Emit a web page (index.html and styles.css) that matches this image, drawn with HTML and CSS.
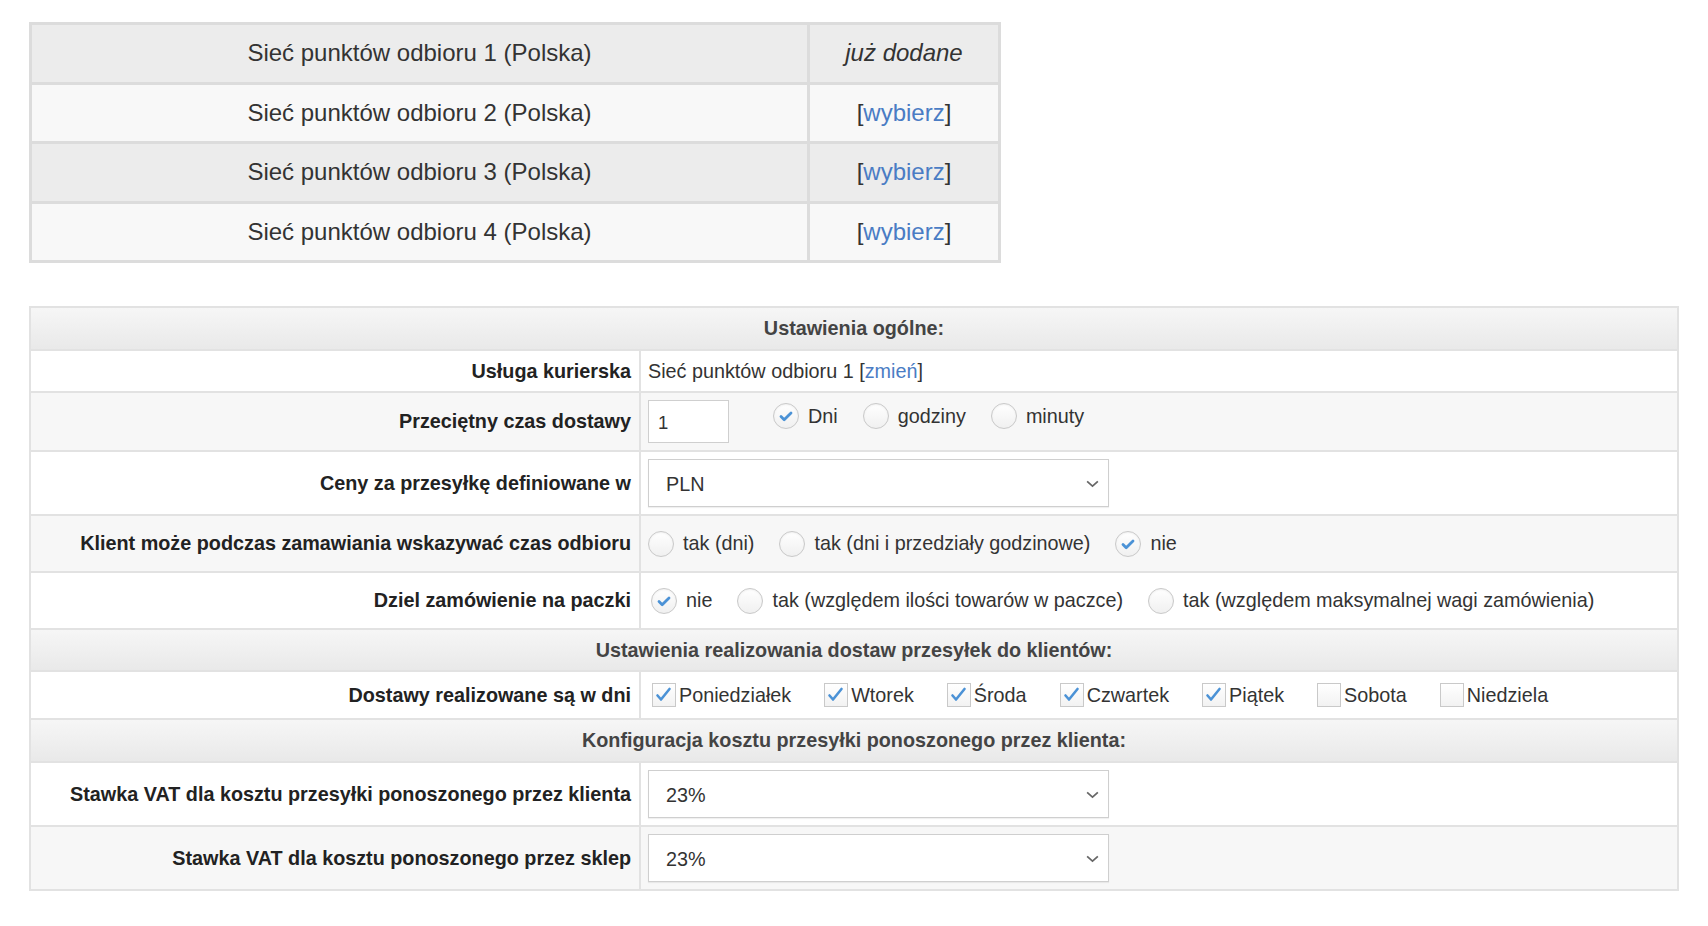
FILE: index.html
```html
<!DOCTYPE html>
<html lang="pl">
<head>
<meta charset="utf-8">
<title>Ustawienia dostawy</title>
<link rel="stylesheet" href="styles.css">
</head>
<body>
<div class="page">
  <table class="carriers">
    <tr class="odd"><td class="name">Sieć punktów odbioru 1 (Polska)</td><td class="act"><em>już dodane</em></td></tr>
    <tr class="even"><td class="name">Sieć punktów odbioru 2 (Polska)</td><td class="act">[<a href="#">wybierz</a>]</td></tr>
    <tr class="odd"><td class="name">Sieć punktów odbioru 3 (Polska)</td><td class="act">[<a href="#">wybierz</a>]</td></tr>
    <tr class="even"><td class="name">Sieć punktów odbioru 4 (Polska)</td><td class="act">[<a href="#">wybierz</a>]</td></tr>
  </table>

  <table class="settings">
    <tr class="head h43"><th colspan="2">Ustawienia ogólne:</th></tr>
    <tr class="white h42">
      <td class="lbl">Usługa kurierska</td>
      <td class="val">Sieć punktów odbioru 1 [<a href="#">zmień</a>]</td>
    </tr>
    <tr class="grey h59">
      <td class="lbl">Przeciętny czas dostawy</td>
      <td class="val">
        <div class="line top">
          <span class="txtinput">1</span>
          <span class="opts">
            <span class="radio on"><svg viewBox="0 0 24 24"><path d="M7 12.5l3.2 3.2L17 9" /></svg></span><span class="rl">Dni</span>
            <span class="radio"></span><span class="rl">godziny</span>
            <span class="radio"></span><span class="rl">minuty</span>
          </span>
        </div>
      </td>
    </tr>
    <tr class="white h64">
      <td class="lbl">Ceny za przesyłkę definiowane w</td>
      <td class="val"><span class="select">PLN<svg class="chev" viewBox="0 0 14 10"><path d="M2 3l5 4.5L12 3" /></svg></span></td>
    </tr>
    <tr class="grey h57">
      <td class="lbl">Klient może podczas zamawiania wskazywać czas odbioru</td>
      <td class="val">
        <div class="line">
          <span class="radio"></span><span class="rl">tak (dni)</span>
          <span class="radio"></span><span class="rl">tak (dni i przedziały godzinowe)</span>
          <span class="radio on"><svg viewBox="0 0 24 24"><path d="M7 12.5l3.2 3.2L17 9" /></svg></span><span class="rl">nie</span>
        </div>
      </td>
    </tr>
    <tr class="white h57">
      <td class="lbl">Dziel zamówienie na paczki</td>
      <td class="val">
        <div class="line ind">
          <span class="radio on"><svg viewBox="0 0 24 24"><path d="M7 12.5l3.2 3.2L17 9" /></svg></span><span class="rl">nie</span>
          <span class="radio"></span><span class="rl">tak (względem ilości towarów w paczce)</span>
          <span class="radio"></span><span class="rl">tak (względem maksymalnej wagi zamówienia)</span>
        </div>
      </td>
    </tr>
    <tr class="head h42"><th colspan="2">Ustawienia realizowania dostaw przesyłek do klientów:</th></tr>
    <tr class="white h48">
      <td class="lbl">Dostawy realizowane są w dni</td>
      <td class="val">
        <div class="line days">
          <span class="check on"><svg viewBox="0 0 22 22"><path d="M4.5 11.5l3.5 4L16.5 5" /></svg></span><span class="cl">Poniedziałek</span>
          <span class="check on"><svg viewBox="0 0 22 22"><path d="M4.5 11.5l3.5 4L16.5 5" /></svg></span><span class="cl">Wtorek</span>
          <span class="check on"><svg viewBox="0 0 22 22"><path d="M4.5 11.5l3.5 4L16.5 5" /></svg></span><span class="cl">Środa</span>
          <span class="check on"><svg viewBox="0 0 22 22"><path d="M4.5 11.5l3.5 4L16.5 5" /></svg></span><span class="cl">Czwartek</span>
          <span class="check on"><svg viewBox="0 0 22 22"><path d="M4.5 11.5l3.5 4L16.5 5" /></svg></span><span class="cl">Piątek</span>
          <span class="check"></span><span class="cl">Sobota</span>
          <span class="check"></span><span class="cl">Niedziela</span>
        </div>
      </td>
    </tr>
    <tr class="head h43"><th colspan="2">Konfiguracja kosztu przesyłki ponoszonego przez klienta:</th></tr>
    <tr class="white h64">
      <td class="lbl">Stawka VAT dla kosztu przesyłki ponoszonego przez klienta</td>
      <td class="val"><span class="select">23%<svg class="chev" viewBox="0 0 14 10"><path d="M2 3l5 4.5L12 3" /></svg></span></td>
    </tr>
    <tr class="grey h64">
      <td class="lbl">Stawka VAT dla kosztu ponoszonego przez sklep</td>
      <td class="val"><span class="select">23%<svg class="chev" viewBox="0 0 14 10"><path d="M2 3l5 4.5L12 3" /></svg></span></td>
    </tr>
  </table>
</div>
</body>
</html>
```

FILE: styles.css
```css
html, body {
  margin: 0;
  padding: 0;
  background: #fff;
}

body {
  font-family: "Liberation Sans", Arial, sans-serif;
  color: #333;
}

.page {
  padding: 22px 0 0 29px;
}

a {
  color: #4a7cc4;
  text-decoration: none;
}

/* ---------- carriers table ---------- */
.carriers {
  width: 972px;
  border-collapse: collapse;
  font-size: 24px;
  color: #333;
  margin-bottom: 43px;
}

.carriers td {
  height: 59.5px;
  padding: 0;
  box-sizing: border-box;
  text-align: center;
  border: 3px solid #dcdcdc;
}

.carriers .name {
  width: 778px;
}

.carriers .act em {
  font-style: italic;
}

.carriers .odd td {
  background: #ececec;
}

.carriers .even td {
  background: #f8f8f8;
}

/* ---------- settings table ---------- */
.settings {
  width: 1650px;
  border-collapse: collapse;
  font-size: 19.8px;
  color: #333;
}

.settings th,
.settings td {
  border: 2px solid #e2e2e2;
  padding: 0;
  box-sizing: border-box;
}

.settings th {
  font-weight: bold;
  color: #444;
  text-align: center;
  background: linear-gradient(#f6f6f6, #e9e9e9);
}

.settings .white td {
  background: #fff;
}

.settings .grey td {
  background: #f7f7f7;
}

.h42 > * { height: 42px; }
.h43 > * { height: 43px; }
.h48 > * { height: 48px; }
.h57 > * { height: 57px; }
.h59 > * { height: 59px; }
.h64 > * { height: 64px; }

.settings .lbl {
  width: 610px;
  text-align: right;
  font-weight: bold;
  padding-right: 8px;
  color: #222;
}

.settings .val {
  text-align: left;
  padding-left: 7px;
}

.line {
  display: flex;
  align-items: center;
}

.line.top {
  align-items: flex-start;
}

.line.ind {
  padding-left: 3px;
}

.opts {
  display: flex;
  align-items: center;
  margin-left: 44px;
  margin-top: 3px;
}

/* text input */
.txtinput {
  display: block;
  width: 81px;
  height: 43px;
  box-sizing: border-box;
  border: 1px solid #cfcfcf;
  background: #fff;
  padding: 11px 0 0 9px;
  font-size: 18.5px;
  line-height: 22px;
}

/* select */
.select {
  position: relative;
  display: flex;
  align-items: center;
  width: 461px;
  height: 48px;
  box-sizing: border-box;
  border: 1px solid #cfcfcf;
  background: #fff;
  padding-left: 17px;
  padding-top: 2px;
  font-size: 19.8px;
  box-shadow: 0 1px 1px rgba(0,0,0,0.06);
}

.chev {
  position: absolute;
  right: 8px;
  top: 18px;
  width: 15px;
  height: 11px;
}

.chev path {
  fill: none;
  stroke: #666;
  stroke-width: 1.6;
}

/* radios */
.radio {
  display: inline-block;
  flex: none;
  width: 26px;
  height: 26px;
  box-sizing: border-box;
  border: 1px solid #c9c9c9;
  border-radius: 50%;
  background: linear-gradient(#ffffff, #f0f0f0);
  box-shadow: inset 0 1px 2px rgba(0,0,0,0.06);
}

.radio svg {
  display: block;
  width: 24px;
  height: 24px;
}

.radio svg path {
  fill: none;
  stroke: #4b92d6;
  stroke-width: 2.8;
  stroke-linecap: round;
  stroke-linejoin: round;
}

.rl {
  margin-left: 9px;
  margin-right: 25px;
}

/* checkboxes */
.days {
  padding-left: 4px;
}

.check {
  display: inline-block;
  flex: none;
  width: 24px;
  height: 24px;
  box-sizing: border-box;
  border: 1px solid #c9c9c9;
  background: linear-gradient(#ffffff, #f2f2f2);
}

.check svg {
  display: block;
  width: 22px;
  height: 22px;
}

.check svg path {
  fill: none;
  stroke: #4b92d6;
  stroke-width: 2.6;
  stroke-linecap: round;
  stroke-linejoin: round;
}

.cl {
  margin-left: 3px;
  margin-right: 33px;
}
```
